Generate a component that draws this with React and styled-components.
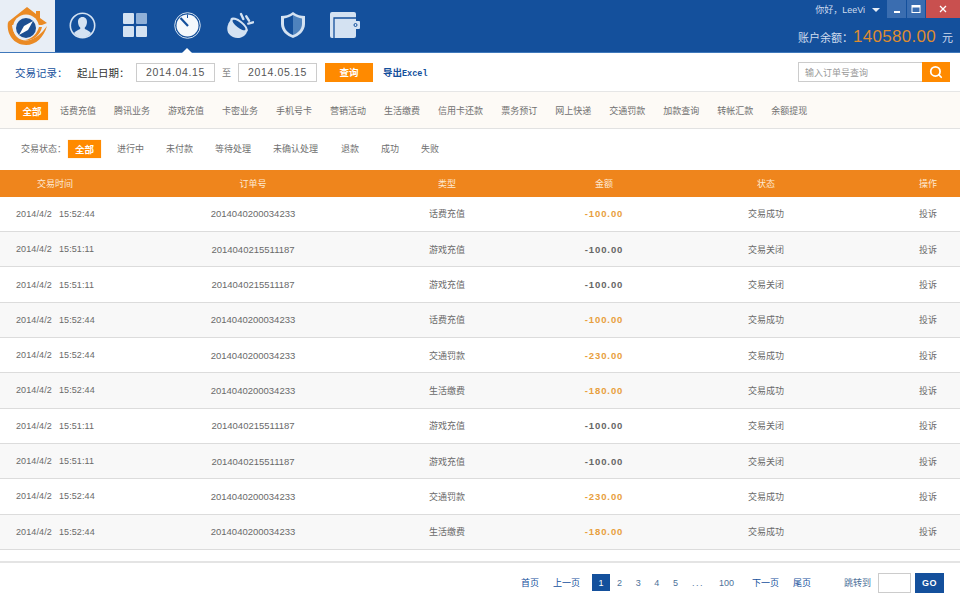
import React from "react";
import styled, { createGlobalStyle } from "styled-components";
import { Search } from "lucide-react";

const Global = createGlobalStyle`
  html, body { margin: 0; padding: 0; background: #fff; }
  body { font-family: "Liberation Sans", "Noto Sans CJK SC", sans-serif; }
  * { box-sizing: border-box; }
`;

const Page = styled.div`
  width: 960px;
  height: 600px;
  overflow: hidden;
  display: flex;
  flex-direction: column;
  background: #fff;
`;

const Header = styled.header`
  height: 53px;
  flex: none;
  display: flex;
  background: #14509c;
  border-bottom: 1px solid #3f78bb;
`;

const LogoCell = styled.div`
  width: 55px;
  background: #e8eef6;
  display: flex;
  align-items: center;
  justify-content: center;
`;

const Nav = styled.nav`
  display: flex;
  padding-left: 1px;
`;

const NavItem = styled.div`
  width: 52.6px;
  position: relative;
  display: flex;
  align-items: center;
  justify-content: center;
  padding-bottom: 2px;
  ${(p) =>
    p.$active &&
    `&::after {
      content: "";
      position: absolute;
      left: 50%;
      bottom: -1px;
      margin-left: -5px;
      border: 5px solid transparent;
      border-top: 0;
      border-bottom-color: #fff;
    }`}
`;

const HeaderRight = styled.div`
  margin-left: auto;
  display: flex;
  flex-direction: column;
  align-items: flex-end;
`;

const TopLine = styled.div`
  display: flex;
  align-items: flex-start;
`;

const UserName = styled.div`
  display: flex;
  align-items: center;
  height: 19px;
  padding-right: 7px;
  gap: 7px;
  font-size: 9px;
  color: #cfdcee;
`;

const Caret = styled.span`
  width: 0;
  height: 0;
  border: 4px solid transparent;
  border-top: 4px solid #e6edf7;
  border-bottom: 0;
`;

const WinButton = styled.div`
  width: ${(p) => p.$w}px;
  height: 18px;
  margin-left: ${(p) => p.$ml || 0}px;
  background: ${(p) => p.$bg};
  display: flex;
  align-items: center;
  justify-content: center;
`;

const Balance = styled.div`
  display: flex;
  align-items: baseline;
  gap: 6px;
  padding-right: 7px;
  margin-top: 8px;
  font-size: 11px;
  color: #cfdcee;
  white-space: nowrap;
`;

const BalanceNum = styled.span`
  font-size: 17px;
  letter-spacing: 0.3px;
  color: #dd8b30;
  margin-left: -6px;
`;

const Toolbar = styled.div`
  height: 39px;
  flex: none;
  display: flex;
  align-items: center;
  padding: 0 10px 0 15px;
  border-bottom: 1px solid #e6e6e6;
`;

const ToolTitle = styled.span`
  font-size: 10.5px;
  color: #14509c;
  width: 62px;
`;

const ToolLabel = styled.span`
  font-size: 10.5px;
  color: #333;
  width: 59px;
`;

const DateBox = styled.div`
  width: 79px;
  height: 19px;
  border: 1px solid #ccc;
  font-size: 10.5px;
  letter-spacing: 0.65px;
  color: #555;
  display: flex;
  align-items: center;
  justify-content: center;
`;

const Between = styled.span`
  width: 23px;
  text-align: center;
  font-size: 9px;
  color: #777;
`;

const QueryButton = styled.div`
  width: 48px;
  height: 19px;
  margin-left: 8px;
  background: #ff8a00;
  color: #fff;
  font-size: 9.5px;
  font-weight: 700;
  display: flex;
  align-items: center;
  justify-content: center;
`;

const ExportLink = styled.span`
  margin-left: 10px;
  font-size: 9.5px;
  font-weight: 700;
  color: #14509c;
  span {
    font-family: "Liberation Mono", monospace;
    font-size: 8.5px;
  }
`;

const SearchBox = styled.div`
  margin-left: auto;
  display: flex;
  height: 20px;
  width: 152px;
`;

const SearchInput = styled.div`
  flex: 1;
  border: 1px solid #ccc;
  border-right: 0;
  padding-left: 6px;
  font-size: 9px;
  color: #999;
  display: flex;
  align-items: center;
`;

const SearchButton = styled.div`
  width: 28px;
  background: #ff8a00;
  display: flex;
  align-items: center;
  justify-content: center;
`;

const TypeRow = styled.div`
  height: 37px;
  flex: none;
  display: flex;
  align-items: center;
  padding: 1px 0 0 16px;
  background: #fdfaf6;
  border-bottom: 1px solid #e2e2e2;
  font-size: 9px;
  color: #707070;
`;

const StatusRow = styled.div`
  height: 41px;
  flex: none;
  display: flex;
  align-items: center;
  padding: 0 0 2px 21px;
  font-size: 9px;
  color: #707070;
`;

const Chip = styled.span`
  width: ${(p) => p.$w}px;
  height: 18px;
  margin-left: ${(p) => p.$ml || 0}px;
  background: #ff8a00;
  box-shadow: 0 0 1px #ffc98a;
  color: #fff;
  font-weight: 700;
  font-size: 9.5px;
  display: flex;
  align-items: center;
  justify-content: center;
`;

const FilterItem = styled.span`
  margin-left: ${(p) => p.$ml}px;
  white-space: nowrap;
`;

const Grid = styled.div`
  display: grid;
  grid-template-columns: 184px 138px 250px 64px 260px 64px;
  align-items: center;
  justify-items: center;
`;

const TableHead = styled(Grid)`
  height: 26.7px;
  flex: none;
  background: #ef851c;
  color: #fde9d2;
  font-size: 9px;
  > :first-child {
    justify-self: start;
    padding-left: 37px;
  }
`;

const Row = styled(Grid)`
  height: 35.33px;
  flex: none;
  background: ${(p) => (p.$odd ? "#f8f8f8" : "#fff")};
  border-bottom: 1px solid #dcdcdc;
  font-size: 9px;
  color: #6a6a6a;
`;

const TimeCell = styled.span`
  justify-self: start;
  padding-left: 16px;
  letter-spacing: 0.1px;
  word-spacing: 4.5px;
`;

const OrderCell = styled.span`
  font-size: 9.5px;
`;

const Amount = styled.span`
  font-size: 9.5px;
  font-weight: 700;
  letter-spacing: 0.9px;
  color: ${(p) => (p.$hot ? "#e8a03e" : "#666")};
`;

const Footer = styled.div`
  margin-top: 11px;
  flex: 1;
  display: flex;
  align-items: center;
  padding: 3px 16px 0 0;
  justify-content: flex-end;
  border-top: 2px solid #e4e4e4;
  font-size: 9px;
  color: #14509c;
`;

const PageLink = styled.span`
  margin-left: ${(p) => p.$ml}px;
  color: ${(p) => (p.$muted ? "#4d7199" : "#14509c")};
  letter-spacing: ${(p) => p.$ls || 0}px;
  white-space: nowrap;
`;

const PageCurrent = styled.span`
  margin-left: 12px;
  width: 18px;
  height: 17px;
  background: #14509c;
  color: #fff;
  display: flex;
  align-items: center;
  justify-content: center;
`;

const JumpInput = styled.div`
  margin-left: 7px;
  width: 33px;
  height: 20px;
  border: 1px solid #ccc;
`;

const GoButton = styled.div`
  margin-left: 4px;
  width: 29px;
  height: 20px;
  background: #14509c;
  color: #fff;
  font-weight: 700;
  font-size: 9px;
  letter-spacing: 0.6px;
  display: flex;
  align-items: center;
  justify-content: center;
`;

const Logo = () => (
  <svg width="55" height="52" viewBox="0 0 55 52">
    <path d="M8 22 L27 7 L36 14 L36 11 L40 11 L40 18 L47 23 L42 25 L12 25 Z" fill="#ea8a24" />
    <path d="M8 22 C6 34 14 45 26 45 C36 45 44 37 47 26 C42 33 35 40 26 40 C18 40 12 33 12 24 Z" fill="#ea8a24" />
    <circle cx="26" cy="27.5" r="13" fill="#e8eef6" />
    <path d="M39 27 C37 34 32 39 25 40 C32 41 40 36 42 27 Z" fill="#ea8a24" />
    <circle cx="26" cy="28" r="10" fill="#1c4f92" />
    <path d="M33 21 L28 30 L19 35 L24 26 Z" fill="#fff" />
  </svg>
);

const c = "#d4e2f2";
const navy = "#14509c";

const IconUser = () => (
  <svg width="27" height="27" viewBox="0 0 27 27">
    <circle cx="13.5" cy="13.5" r="12.2" fill="none" stroke={c} strokeWidth="1.6" />
    <path d="M13.5 5 C10.4 5 9 7.4 9 10 C9 12.6 10.2 14.6 11.2 15.6 L11.2 17 C9 18 6.4 19 5 21 C7 24 10 25.4 13.5 25.4 C17 25.4 20 24 22 21 C20.6 19 18 18 15.8 17 L15.8 15.6 C16.8 14.6 18 12.6 18 10 C18 7.4 16.6 5 13.5 5 Z" fill={c} />
  </svg>
);
const IconGrid = () => (
  <svg width="24" height="24" viewBox="0 0 24 24">
    <rect x="0" y="0" width="11" height="11" rx="1" fill={c} />
    <rect x="13" y="0" width="11" height="11" rx="1" fill="#8fb0d8" />
    <rect x="0" y="13" width="11" height="11" rx="1" fill={c} />
    <rect x="13" y="13" width="11" height="11" rx="1" fill={c} />
  </svg>
);
const IconClock = () => (
  <svg width="27" height="27" viewBox="0 0 27 27">
    <circle cx="13.5" cy="13.5" r="12.8" fill="none" stroke="#e8f0f8" strokeWidth="0.9" />
    <circle cx="13.5" cy="13.5" r="11" fill="#f4f8fc" />
    <path d="M6.5 6 L14 14" stroke={navy} strokeWidth="2.2" />
    <path d="M13.5 2.5 L13.5 6" stroke={navy} strokeWidth="1" />
  </svg>
);
const IconMegaphone = () => (
  <svg width="28" height="27" viewBox="0 0 28 27">
    <path d="M5 8 C1 12 0 18 3 22 C7 27 14 27 18 24 C20 22.5 21 20 21.5 18 Z" fill={c} />
    <ellipse cx="13" cy="13" rx="10.5" ry="4.6" transform="rotate(38 13 13)" fill={c} />
    <ellipse cx="13" cy="13" rx="8" ry="2.6" transform="rotate(38 13 13)" fill={navy} />
    <path d="M15 2 L17.3 7 M20.3 4.3 L23 8.7 M22.3 11.6 L27 10.3" stroke={c} strokeWidth="2.4" strokeLinecap="round" />
  </svg>
);
const IconShield = () => (
  <svg width="26" height="28" viewBox="0 0 26 28">
    <path d="M13 1 C9 4 5 5 1 5 L1 13 C1 20 7 25 13 27 C19 25 25 20 25 13 L25 5 C21 5 17 4 13 1 Z" fill={c} />
    <path d="M13 4 C10 6 7 7 4 7.4 L4 13 C4 18 8 22 13 24 Z" fill={navy} />
    <path d="M13 4 C16 6 19 7 22 7.4 L22 13 C22 18 18 22 13 24 Z" fill="#4e82bd" />
  </svg>
);
const IconWallet = () => (
  <svg width="30" height="26" viewBox="0 0 30 26">
    <path d="M2 0 H24 a2 2 0 0 1 2 2 V9 H29 a1 1 0 0 1 1 1 V16 a1 1 0 0 1 -1 1 H26 V24 a2 2 0 0 1 -2 2 H2 a2 2 0 0 1 -2 -2 V2 a2 2 0 0 1 2 -2 Z" fill={c} />
    <path d="M4 26 V6 H26" fill="none" stroke={navy} strokeWidth="1.3" />
    <circle cx="25.5" cy="13" r="1.5" fill={c} stroke={navy} strokeWidth="1" />
  </svg>
);

const navIcons = [IconUser, IconGrid, IconClock, IconMegaphone, IconShield, IconWallet];

const types = [
  ["话费充值", 12],
  ["腾讯业务", 18],
  ["游戏充值", 18],
  ["卡密业务", 18],
  ["手机号卡", 18],
  ["营销活动", 18],
  ["生活缴费", 18],
  ["信用卡还款", 18],
  ["票务预订", 18],
  ["网上快递", 18],
  ["交通罚款", 18],
  ["加款查询", 18],
  ["转帐汇款", 18],
  ["余额提现", 18],
];

const statuses = [
  ["进行中", 16],
  ["未付款", 22],
  ["等待处理", 22],
  ["未确认处理", 22],
  ["退款", 23],
  ["成功", 22],
  ["失败", 22],
];

const A = ["2014/4/2 15:52:44", "2014040200034233"];
const B = ["2014/4/2 15:51:11", "2014040215511187"];
const rows = [
  [...A, "话费充值", "-100.00", "交易成功", true],
  [...B, "游戏充值", "-100.00", "交易关闭", false],
  [...B, "游戏充值", "-100.00", "交易关闭", false],
  [...A, "话费充值", "-100.00", "交易成功", true],
  [...A, "交通罚款", "-230.00", "交易成功", true],
  [...A, "生活缴费", "-180.00", "交易成功", true],
  [...B, "游戏充值", "-100.00", "交易关闭", false],
  [...B, "游戏充值", "-100.00", "交易关闭", false],
  [...A, "交通罚款", "-230.00", "交易成功", true],
  [...A, "生活缴费", "-180.00", "交易成功", true],
];

export default function App() {
  return (
    <Page>
      <Global />
      <Header>
        <LogoCell>
          <Logo />
        </LogoCell>
        <Nav>
          {navIcons.map((Icon, i) => (
            <NavItem key={i} $active={i === 2}>
              <Icon />
            </NavItem>
          ))}
        </Nav>
        <HeaderRight>
          <TopLine>
            <UserName>
              你好，LeeVi <Caret />
            </UserName>
            <WinButton $w={19} $bg="#3a6db0">
              <svg width="8" height="8"><rect x="1" y="6" width="6" height="2" fill="#fff" /></svg>
            </WinButton>
            <WinButton $w={18} $ml={1} $bg="#3a6db0">
              <svg width="10" height="8"><rect x="1" y="0.5" width="8" height="7" fill="none" stroke="#fff" strokeWidth="1" /><rect x="1" y="0.5" width="8" height="2" fill="#fff" /></svg>
            </WinButton>
            <WinButton $w={34} $ml={1} $bg="#c9504f">
              <svg width="8" height="8"><path d="M1 1 L7 7 M7 1 L1 7" stroke="#fff" strokeWidth="1.3" /></svg>
            </WinButton>
          </TopLine>
          <Balance>
            账户余额：<BalanceNum>140580.00</BalanceNum> 元
          </Balance>
        </HeaderRight>
      </Header>

      <Toolbar>
        <ToolTitle>交易记录：</ToolTitle>
        <ToolLabel>起止日期：</ToolLabel>
        <DateBox>2014.04.15</DateBox>
        <Between>至</Between>
        <DateBox>2014.05.15</DateBox>
        <QueryButton>查询</QueryButton>
        <ExportLink>
          导出<span>Excel</span>
        </ExportLink>
        <SearchBox>
          <SearchInput>输入订单号查询</SearchInput>
          <SearchButton>
            <Search size={14} color="#fff" strokeWidth={3} />
          </SearchButton>
        </SearchBox>
      </Toolbar>

      <TypeRow>
        <Chip $w={32}>全部</Chip>
        {types.map(([name, ml]) => (
          <FilterItem key={name} $ml={ml}>
            {name}
          </FilterItem>
        ))}
      </TypeRow>

      <StatusRow>
        交易状态：
        <Chip $w={33} $ml={2}>全部</Chip>
        {statuses.map(([name, ml]) => (
          <FilterItem key={name} $ml={ml}>
            {name}
          </FilterItem>
        ))}
      </StatusRow>

      <TableHead>
        <span>交易时间</span>
        <span>订单号</span>
        <span>类型</span>
        <span>金额</span>
        <span>状态</span>
        <span>操作</span>
      </TableHead>

      {rows.map((r, i) => (
        <Row key={i} $odd={i % 2 === 1}>
          <TimeCell>{r[0]}</TimeCell>
          <OrderCell>{r[1]}</OrderCell>
          <span>{r[2]}</span>
          <Amount $hot={r[5]}>{r[3]}</Amount>
          <span>{r[4]}</span>
          <span>投诉</span>
        </Row>
      ))}

      <Footer>
        <PageLink $ml={0}>首页</PageLink>
        <PageLink $ml={14}>上一页</PageLink>
        <PageCurrent>1</PageCurrent>
        <PageLink $ml={7} $muted>2</PageLink>
        <PageLink $ml={13.6} $muted>3</PageLink>
        <PageLink $ml={13.6} $muted>4</PageLink>
        <PageLink $ml={13.6} $muted>5</PageLink>
        <PageLink $ml={14} $ls={1.5} $muted>...</PageLink>
        <PageLink $ml={15} $muted>100</PageLink>
        <PageLink $ml={18}>下一页</PageLink>
        <PageLink $ml={14}>尾页</PageLink>
        <PageLink $ml={33} $muted>跳转到</PageLink>
        <JumpInput />
        <GoButton>GO</GoButton>
      </Footer>
    </Page>
  );
}
